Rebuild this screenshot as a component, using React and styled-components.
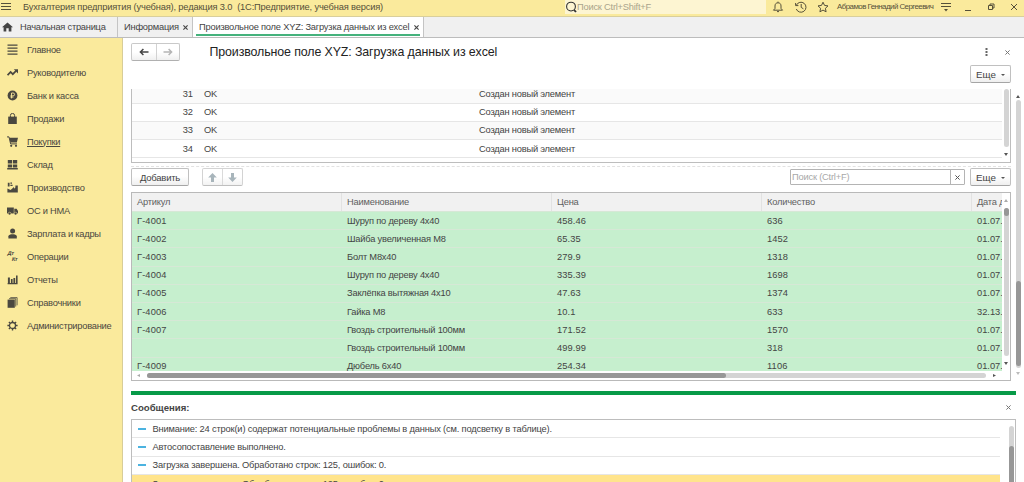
import React from 'react';
import styled, { createGlobalStyle } from 'styled-components';

const GlobalStyle = createGlobalStyle`
  * {
    box-sizing: border-box;
  }
  body {
    margin: 0;
    background: #fff;
    font-family: "Liberation Sans", Arial, sans-serif;
    font-size: 9.3px;
    letter-spacing: -0.2px;
    color: #444;
    overflow: hidden;
  }
`

const Window = styled.div`
  width: 1024px;
  height: 482px;
  display: flex;
  flex-direction: column;
  overflow: hidden;
`

const TitleBar = styled.header`
  height: 17px;
  flex: none;
  display: flex;
  align-items: center;
  background: #faea9c;
  border-bottom: 1px solid #d9cf9c;
  padding: 0 5px 3px 1px;
  color: #55503a;
`
const TitleText = styled.span`
  flex: 1;
  padding-left: 12px;
  letter-spacing: -0.16px;
  white-space: pre;
`
const GlobalSearch = styled.div`
  width: 201px;
  height: 14px;
  display: flex;
  align-items: center;
  background: #fdf5d2;
  color: #aaa48c;
  letter-spacing: -0.22px;
  margin-right: 6px;
`
const TitleIcons = styled.div`
  display: flex;
  gap: 10.5px;
  margin-right: 8px;
`
const UserName = styled.span`
  width: 97px;
  font-size: 7.9px;
  letter-spacing: -0.54px;
  white-space: nowrap;
`
const MenuButton = styled.span`
  display: flex;
  margin: 0 2px 0 7px;
`
const WindowButtons = styled.div`
  display: flex;
  align-items: center;
  gap: 13px;
  margin-left: 10px;
`

const TabBar = styled.nav`
  height: 21px;
  flex: none;
  display: flex;
  background: #f0f0f0;
  border-bottom: 1px solid #bcbcbc;
`
const Tab = styled.div`
  width: ${props => props.$width}px;
  display: flex;
  align-items: center;
  justify-content: space-between;
  padding: 0 4px 0 ${props => props.$left || 6}px;
  border-right: 1px solid #c4c4c4;
  white-space: nowrap;
  background: ${props => props.$active ? '#fff' : 'transparent'};
  box-shadow: ${props => props.$active ? 'inset 3px 0 #fff, inset -3px 0 #fff, inset 0 -1px #fff, inset 0 -3px #45b27c' : 'none'};
`
const HomeTab = styled(Tab)`
  justify-content: flex-start;
  gap: 7px;
  letter-spacing: -0.24px;
`

const Body = styled.div`
  flex: 1;
  min-height: 0;
  display: flex;
`
const Sidebar = styled.aside`
  width: 123px;
  flex: none;
  background: #faea9c;
  border-right: 1px solid #d8cd98;
`
const MenuItem = styled.div`
  height: 23px;
  display: flex;
  align-items: center;
  gap: 9px;
  padding-left: 7px;
  color: #4a4840;
  letter-spacing: -0.25px;
  white-space: nowrap;
  text-decoration: ${props => props.$underlined ? 'underline' : 'none'};
`

const Main = styled.main`
  flex: 1;
  min-width: 0;
  display: flex;
  flex-direction: column;
  padding: 5px 8px 0 8px;
`
const FormHead = styled.div`
  height: 18px;
  flex: none;
  display: flex;
  align-items: center;
`
const Group = styled.div`
  height: 18px;
  display: flex;
  border: 1px solid #c9c9c9;
  border-bottom-color: #b0b0b0;
  border-radius: 2px;
  background: linear-gradient(#fff 50%, #f0f0f0);
  opacity: ${props => props.$muted ? 0.8 : 1};
`
const GroupButton = styled.span`
  width: ${props => props.$width}px;
  display: flex;
  align-items: center;
  justify-content: center;
  & + & {
    border-left: 1px solid #d2d2d2;
  }
`
const FormTitle = styled.h1`
  flex: 1;
  margin: 0 0 0 29.5px;
  font-size: 12.4px;
  font-weight: normal;
  letter-spacing: -0.11px;
  color: #222;
`
const HeadIcons = styled.div`
  display: flex;
  align-items: center;
  gap: 17px;
  margin-right: 6px;
`
const CommandRow = styled.div`
  height: 28px;
  flex: none;
  display: flex;
  justify-content: flex-end;
  padding: 4px 5px 0 0;
`
const Button = styled.div`
  width: ${props => props.$width}px;
  height: 18px;
  display: flex;
  align-items: center;
  justify-content: center;
  gap: 5px;
  border: 1px solid #c0c0c0;
  border-bottom: 1px solid #a5a5a5;
  border-radius: 2px;
  background: linear-gradient(#fff 45%, #efefef);
  font-size: ${props => props.$wide ? 9.5 : 9.8}px;
  letter-spacing: ${props => props.$wide ? -0.25 : 0}px;
`

const FormArea = styled.div`
  height: 292px;
  flex: none;
  display: flex;
  justify-content: space-between;
  margin-right: -6px;
`
const FormColumn = styled.div`
  width: 880px;
`
const LogTable = styled.div`
  height: 74px;
  display: flex;
  border: 1px solid #bdbdbd;
  border-top: none;
`
const LogRows = styled.div`
  flex: 1;
  overflow: hidden;
`
const LogRow = styled.div`
  height: 18.2px;
  display: grid;
  grid-template-columns: 61px 11px 275px 1fr;
  align-items: center;
  border-bottom: 1px solid #e6e6e6;
  background: ${props => props.$striped ? '#fafafa' : '#fff'};
  &:first-child {
    height: 14.6px;
    padding-bottom: 3px;
  }
`
const RowNumber = styled.span`
  text-align: right;
  letter-spacing: 0;
`
const DashedLine = styled.div`
  height: 6px;
  margin-top: 3px;
  border-top: 1px dashed #e2e2e2;
`
const Splitter = styled.div`
  height: 2px;
`

const Toolbar = styled.div`
  height: 19px;
  display: flex;
  align-items: flex-start;
  margin-top: -4px;
`
const Spacer = styled.div`
  flex: ${props => props.$width ? `0 0 ${props.$width}px` : 1};
`
const SearchBox = styled.div`
  width: 175px;
  height: 16px;
  margin: 1px 5px 0 0;
  display: flex;
  align-items: center;
  justify-content: space-between;
  border: 1px solid #b4b4b4;
  border-radius: 1px;
  padding-left: 1px;
  color: #a8a8a8;
`
const ClearButton = styled.span`
  width: 14px;
  height: 14px;
  display: flex;
  align-items: center;
  justify-content: center;
  border-left: 1px solid #b4b4b4;
`

const DataTable = styled.div`
  height: 189px;
  margin-top: 5px;
  border: 1px solid #b9b9b9;
`
const TableTop = styled.div`
  height: 178px;
  display: flex;
`
const TableRows = styled.div`
  width: 870px;
  overflow: hidden;
`
const HeaderRow = styled.div`
  height: 18px;
  display: grid;
  grid-template-columns: 210px 210px 210px 210px 30px;
  background: #f1f1f1;
  color: #606060;
`
const HeaderCell = styled.div`
  display: flex;
  align-items: center;
  padding-left: 5px;
  border-right: 1px solid #e2e2e2;
  white-space: nowrap;
  overflow: hidden;
  &:last-child {
    border-right: none;
  }
`
const DataRow = styled.div`
  height: 18.2px;
  display: grid;
  grid-template-columns: 210px 210px 210px 210px 30px;
  align-items: center;
  background: #c6efce;
  border-top: 1px solid #d6e8d6;
`
const DataCell = styled.div`
  padding-left: 5px;
  letter-spacing: ${props => props.$text ? -0.2 : 0.12}px;
  white-space: nowrap;
  overflow: hidden;
  &:last-child {
    letter-spacing: 0;
  }
`

const VScroll = styled.div`
  width: 8px;
  flex: none;
  display: flex;
  flex-direction: column;
  align-items: center;
  padding: ${props => props.$pad || '0'};
`
const VTrack = styled.div`
  width: 5px;
  flex: 1;
  border-radius: 3px;
  background: #d4d4d4;
  padding-top: ${props => props.$offset || 0}px;
`
const VThumb = styled.div`
  height: ${props => props.$height}px;
  border-radius: 3px;
  background: #979797;
`
const HScroll = styled.div`
  height: 9px;
  display: flex;
  align-items: center;
  gap: 6px;
  padding: 0 14px 0 5px;
`
const HTrack = styled.div`
  flex: 1;
  height: 5px;
  border-radius: 3px;
  background: #d4d4d4;
`
const HThumb = styled.div`
  width: 579px;
  height: 5px;
  border-radius: 3px;
  background: #979797;
`

const GreenBar = styled.div`
  height: 4px;
  flex: none;
  width: 885px;
  background: #079a48;
  margin-top: 10px;
`
const MessagesHead = styled.div`
  height: 24px;
  flex: none;
  display: flex;
  align-items: center;
  justify-content: space-between;
  padding-right: 5px;
  font-weight: bold;
  font-size: 9.6px;
  letter-spacing: 0;
`
const Messages = styled.div`
  width: 885px;
  flex: 1;
  display: flex;
  border: 1px solid #bdbdbd;
  border-bottom: none;
  overflow: hidden;
`
const MessageRows = styled.div`
  flex: 1;
  margin-right: 7px;
`
const Message = styled.div`
  height: 18.3px;
  display: flex;
  align-items: center;
  gap: 6.5px;
  padding-left: 6px;
  border-bottom: 1px solid #e6e6e6;
  background: ${props => props.$selected ? '#ffe48c' : '#fff'};
  letter-spacing: -0.17px;
  white-space: nowrap;
`
const Dash = styled.span`
  width: 8px;
  height: 2px;
  background: #4cb3e0;
`

const Svg = ({ w = 11, h = 11, box = '0 0 11 11', children }) => (
  <svg width={w} height={h} viewBox={box} fill="none" stroke="currentColor" strokeWidth="1">
    {children}
  </svg>
)

const Cross = ({ size = 5, color = '#555', weight = 1 }) => (
  <svg width={size} height={size} viewBox="0 0 5 5" stroke={color} strokeWidth={weight}>
    <path d="M.4.4 4.6 4.6M4.6.4.4 4.6" />
  </svg>
)

const Tri = ({ d = 'M0 0h4L2 3z', color = '#555' }) => (
  <svg width="4" height="3" viewBox="0 0 4 3" fill={color}><path d={d} /></svg>
)
const UP = 'M0 3h4L2 0z'

const Arrow = ({ color, flip }) => (
  <svg width="10" height="8" viewBox="0 0 10 8" fill="none" stroke={color} strokeWidth="1.5">
    <path d={flip ? 'M.5 4h8M5.6 1 8.6 4 5.6 7' : 'M9.5 4h-8M4.4 1 1.4 4l3 3'} />
  </svg>
)

const BlockArrow = ({ down }) => (
  <svg width="9" height="9" viewBox="0 0 9 9" fill="#93a3ab">
    <path d={down ? 'M3 0h3v4.5h2.8L4.5 9 .2 4.5H3z' : 'M3 9h3V4.5h2.8L4.5 0 .2 4.5H3z'} />
  </svg>
)

const icons = {
  main: <path d="M.5 1.2h10M.5 4.2h10M.5 7.2h10M.5 10.2h10" strokeWidth="1.3" />,
  chief: <><path d="M.6 8.2 3.6 5l2.2 2.2L9.3 3.6" strokeWidth="1.7" /><path d="M6.8 2.2H11v4.2z" fill="currentColor" stroke="none" /></>,
  bank: <><circle cx="5.5" cy="5.5" r="4.9" fill="currentColor" stroke="none" /><path d="M4.5 8.4V3h1.6a1.4 1.4 0 0 1 0 2.9H3.4M3.4 7.1h3" stroke="#faea9c" strokeWidth=".9" /></>,
  sales: <><path d="M1.2 3.6h8.6V11H1.2z" fill="currentColor" stroke="none" /><path d="M3.4 5V2.5a2.1 2.1 0 0 1 4.2 0V5" /></>,
  buy: <><path d="M2.4 1.8H11L9.8 6.4H3.4z" fill="currentColor" stroke="none" /><path d="M0 .9h2l1.6 7h6.4" /><circle cx="4.2" cy="9.8" r="1.1" fill="currentColor" stroke="none" /><circle cx="9" cy="9.8" r="1.1" fill="currentColor" stroke="none" /></>,
  stock: <path d="M.8 1h4.3v3.6H.8zM5.9 1h4.3v3.6H5.9zM.8 5.4h4.3v3H.8zM5.9 5.4h4.3v3H5.9zM.2 9h10.6v1.4H.2z" fill="currentColor" stroke="none" />,
  factory: <path d="M.4 10.6V6.4L3.6 8 7 5v1.8l1.4-1.4V3.4h2.4v7.2zM.8.8h1.8v3.6H.8zM3.4.6h1.6v1.2H3.4zM3.4 2.8h2.2V4H3.4z" fill="currentColor" stroke="none" />,
  truck: <><path d="M0 2.4h6.8v6H0zM7.3 3.8h2.3L11 6v2.4H7.3z" fill="currentColor" stroke="none" /><circle cx="2.6" cy="8.6" r="1.4" fill="currentColor" stroke="#faea9c" strokeWidth=".5" /><circle cx="8.6" cy="8.6" r="1.4" fill="currentColor" stroke="#faea9c" strokeWidth=".5" /></>,
  people: <><circle cx="5.6" cy="3" r="2.5" fill="currentColor" stroke="none" /><path d="M1.4 10.4V8.2c0-1 1.6-1.7 3-2h2.4c1.4.3 3 1 3 2v2.2z" fill="currentColor" stroke="none" /></>,
  reports: <path d="M.9 3.4h2v6h-2zM3.9 5h1.7v4.4H3.9zM6.4 4h1.8v5.4H6.4zM9 1.6h1.6v7.8H9zM.6 9h10v1.2H.6z" fill="currentColor" stroke="none" />,
  books: <><path d="M.6 2.6h7.2v8.2H.6z" fill="currentColor" stroke="none" /><path d="M2 1.7h6.7v7.9M3.3.6h6.8v7.7" strokeWidth=".8" /></>,
  gear: <><circle cx="5.5" cy="5.5" r="3" strokeWidth="1.3" /><path d="M5.5.4v2M5.5 8.6v2M.4 5.5h2M8.6 5.5h2M1.9 1.9l1.3 1.3M7.8 7.8l1.3 1.3M9.1 1.9 7.8 3.2M3.2 7.8 1.9 9.1" strokeWidth="1.4" /></>,
}

const DebitCredit = styled.span`
  width: 11px;
  height: 11px;
  display: flex;
  flex-direction: column;
  font-size: 5.6px;
  font-weight: bold;
  line-height: 5.5px;
  transform: skewX(-12deg);
  & > :last-child {
    align-self: flex-end;
  }
`

const menu = [
  ['main', 'Главное'],
  ['chief', 'Руководителю'],
  ['bank', 'Банк и касса'],
  ['sales', 'Продажи'],
  ['buy', 'Покупки'],
  ['stock', 'Склад'],
  ['factory', 'Производство'],
  ['truck', 'ОС и НМА'],
  ['people', 'Зарплата и кадры'],
  ['entries', 'Операции'],
  ['reports', 'Отчеты'],
  ['books', 'Справочники'],
  ['gear', 'Администрирование'],
]

const log = [31, 32, 33, 34]

const rows = [
  ['Г-4001', 'Шуруп по дереву 4x40', '458.46', '636', '01.07.'],
  ['Г-4002', 'Шайба увеличенная М8', '65.35', '1452', '01.07.'],
  ['Г-4003', 'Болт М8x40', '279.9', '1318', '01.07.'],
  ['Г-4004', 'Шуруп по дереву 4x40', '335.39', '1698', '01.07.'],
  ['Г-4005', 'Заклёпка вытяжная 4x10', '47.63', '1374', '01.07.'],
  ['Г-4006', 'Гайка М8', '10.1', '633', '32.13.'],
  ['Г-4007', 'Гвоздь строительный 100мм', '171.52', '1570', '01.07.'],
  ['', 'Гвоздь строительный 100мм', '499.99', '318', '01.07.'],
  ['Г-4009', 'Дюбель 6x40', '254.34', '1106', '01.07.'],
]

const messages = [
  'Внимание: 24 строк(и) содержат потенциальные проблемы в данных (см. подсветку в таблице).',
  'Автосопоставление выполнено.',
  'Загрузка завершена. Обработано строк: 125, ошибок: 0.',
  'Загрузка завершена. Обработано строк: 125, ошибок: 0.',
]

const App = () => {
  return (
    <Window>
      <GlobalStyle />
      <TitleBar>
        <Svg w={10} h={9} box="0 0 10 9"><path d="M0 1.5h10M0 4.5h10M0 7.5h10" /></Svg>
        <TitleText>Бухгалтерия предприятия (учебная), редакция 3.0  (1С:Предприятие, учебная версия)</TitleText>
        <GlobalSearch>
          <svg width="12" height="12" viewBox="0 0 12 12" fill="none" stroke="#333" strokeWidth="1.1">
            <circle cx="6" cy="5.6" r="4.4" /><path d="m9 8.8 2 2.2" strokeWidth="1.8" />
          </svg>
          Поиск Ctrl+Shift+F
        </GlobalSearch>
        <TitleIcons>
          <Svg w={12} h={12} box="0 0 12 12"><path d="M1.5 9.2h9L9 7.4V5c0-2-1-3.2-3-3.2S3 3 3 5v2.4zM5 10.6h2M6 .6v1" /></Svg>
          <Svg w={12} h={12} box="0 0 12 12"><path d="M1.4 4.2A5 5 0 1 1 1.3 8M.6 2v2.6h2.8M6.2 3v3.4l2.2 1.4" /></Svg>
          <Svg w={12} h={12} box="0 0 12 12"><path d="m6 1.2 1.5 3.2 3.5.5-2.6 2.4.7 3.5L6 9.1l-3.1 1.7.7-3.5L1 4.9l3.5-.5z" /></Svg>
        </TitleIcons>
        <UserName>Абрамов Геннадий Сергеевич</UserName>
        <MenuButton>
          <Svg w={10} h={10} box="0 0 10 10"><path d="M0 1.5h10M0 4.5h10" /><path d="M3 7h4L5 9.5z" fill="currentColor" stroke="none" /></Svg>
        </MenuButton>
        <WindowButtons>
          <Svg w={10} h={8} box="0 0 10 8"><path d="M2 7.5h6" /></Svg>
          <Svg w={10} h={8} box="0 0 10 8"><path d="M2.5 2.5h4v4h-4zM4 2.5V1h4v4H6.5" /></Svg>
          <Svg w={10} h={8} box="0 0 10 8"><path d="m2 1 6 6M8 1 2 7" /></Svg>
        </WindowButtons>
      </TitleBar>

      <TabBar>
        <HomeTab $width={118} $left={2}>
          <svg width="11" height="10" viewBox="0 0 11 10" fill="#444"><path d="M5.5.4 11 5.2H9.4V9.4H6.7V6.3H4.3v3.1H1.6V5.2H0z" /></svg>
          Начальная страница
        </HomeTab>
        <Tab $width={75}>Информация <Cross color="#444" weight={1.1} /></Tab>
        <Tab $width={231} $active>Произвольное поле XYZ: Загрузка данных из excel <Cross color="#444" weight={1.1} /></Tab>
      </TabBar>

      <Body>
        <Sidebar>
          {menu.map(([icon, label]) => (
            <MenuItem key={label} $underlined={icon === 'buy'}>
              {icon === 'entries'
                ? <DebitCredit><span>Дт</span><span>Кт</span></DebitCredit>
                : <Svg>{icons[icon]}</Svg>}
              {label}
            </MenuItem>
          ))}
        </Sidebar>

        <Main>
          <FormHead>
            <Group>
              <GroupButton $width={24}><Arrow color="#444" /></GroupButton>
              <GroupButton $width={23}><Arrow color="#b5b5b5" flip /></GroupButton>
            </Group>
            <FormTitle>Произвольное поле XYZ: Загрузка данных из excel</FormTitle>
            <HeadIcons>
              <svg width="3" height="8" viewBox="0 0 3 8" fill="#666"><path d="M.5 0h2v2h-2zM.5 3h2v2h-2zM.5 6h2v2h-2z" /></svg>
              <Cross color="#777" />
            </HeadIcons>
          </FormHead>
          <CommandRow>
            <Button $width={41}>Еще <Tri d="M0 1h4L2 3z" /></Button>
          </CommandRow>

          <FormArea>
            <FormColumn>
              <LogTable>
                <LogRows>
                  {log.map((n, i) => (
                    <LogRow key={n} $striped={i % 2 === 0}>
                      <RowNumber>{n}</RowNumber>
                      <span />
                      <span>OK</span>
                      <span>Создан новый элемент</span>
                    </LogRow>
                  ))}
                </LogRows>
                <VScroll $pad="0 0 6px">
                  <VTrack />
                  <Splitter />
                  <Splitter />
                  <Splitter />
                  <Tri />
                </VScroll>
              </LogTable>
              <DashedLine />
              <Toolbar>
                <Button $width={58} $wide>Добавить</Button>
                <Spacer $width={13} />
                <Group $muted>
                  <GroupButton $width={19}><BlockArrow /></GroupButton>
                  <GroupButton $width={20}><BlockArrow down /></GroupButton>
                </Group>
                <Spacer />
                <SearchBox>
                  Поиск (Ctrl+F)
                  <ClearButton><Cross /></ClearButton>
                </SearchBox>
                <Button $width={41}>Еще <Tri d="M0 1h4L2 3z" /></Button>
              </Toolbar>

              <DataTable>
                <TableTop>
                  <TableRows>
                    <HeaderRow>
                      <HeaderCell>Артикул</HeaderCell>
                      <HeaderCell>Наименование</HeaderCell>
                      <HeaderCell>Цена</HeaderCell>
                      <HeaderCell>Количество</HeaderCell>
                      <HeaderCell>Дата д</HeaderCell>
                    </HeaderRow>
                    {rows.map((row, i) => (
                      <DataRow key={i}>
                        {row.map((cell, j) => <DataCell key={j} $text={j === 1}>{cell}</DataCell>)}
                      </DataRow>
                    ))}
                  </TableRows>
                  <VScroll $pad="6px 0 6px">
                    <Tri d={UP} color="#aaa" />
                    <Splitter />
                    <Splitter />
                    <Splitter />
                    <VTrack><VThumb $height={8} /></VTrack>
                    <Splitter />
                    <Splitter />
                    <Splitter />
                    <Tri />
                  </VScroll>
                </TableTop>
                <HScroll>
                  <Tri d="M3 0v3L0 1.5z" color="#aaa" />
                  <HTrack><HThumb /></HTrack>
                  <Tri d="M1 0v3l3-1.5z" />
                </HScroll>
              </DataTable>
            </FormColumn>
            <VScroll $pad="6px 0 6px">
              <Tri d={UP} />
              <Splitter />
              <VTrack $offset={181}><VThumb $height={85} /></VTrack>
              <Splitter />
              <Splitter />
              <Tri color="#bbb" />
            </VScroll>
          </FormArea>

          <GreenBar />
          <MessagesHead>Сообщения: <Cross color="#777" /></MessagesHead>
          <Messages>
            <MessageRows>
              {messages.map((text, i) => (
                <Message key={i} $selected={i === 3}><Dash />{text}</Message>
              ))}
            </MessageRows>
            <VScroll $pad="6px 0 0">
              <Tri d={UP} />
              <Splitter />
              <Splitter />
              <Splitter />
              <VTrack $offset={20}><VThumb $height={40} /></VTrack>
            </VScroll>
          </Messages>
        </Main>
      </Body>
    </Window>
  )
}

export default App;
